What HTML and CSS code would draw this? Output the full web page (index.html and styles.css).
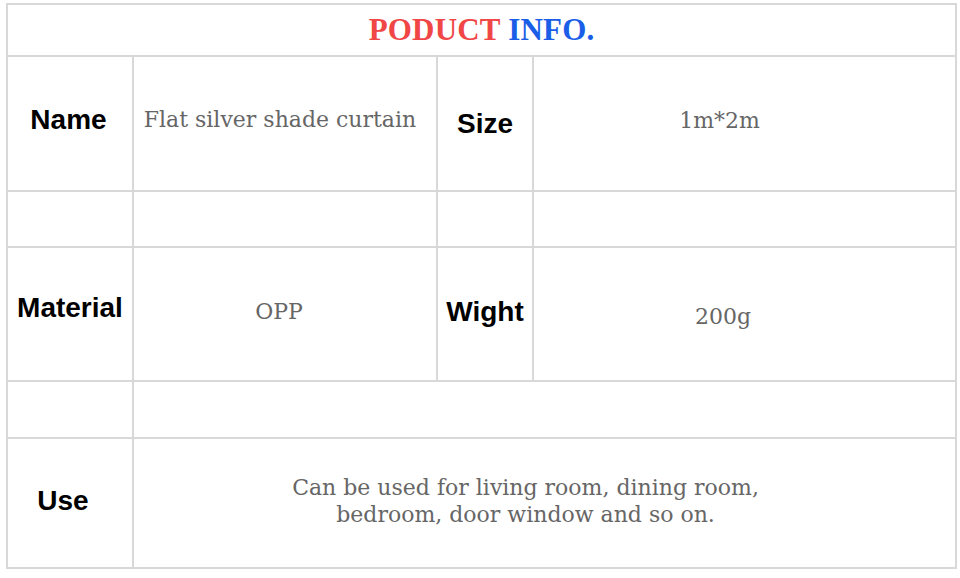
FILE: index.html
```html
<!DOCTYPE html>
<html>
<head>
<meta charset="utf-8">
<link rel="stylesheet" href="styles.css">
</head>
<body>
<table class="info">
  <colgroup>
    <col class="c1"><col class="c2"><col class="c3"><col class="c4">
  </colgroup>
  <tr class="r-head">
    <td colspan="4" class="title"><span class="red">PODUCT</span> <span class="blue">INFO.</span></td>
  </tr>
  <tr class="r-main">
    <td class="label up4 nudge-l">Name</td>
    <td class="value up4 nudge-v">Flat silver shade curtain</td>
    <td class="label">Size</td>
    <td class="value up3 shift-a">1m*2m</td>
  </tr>
  <tr class="r-gap"><td></td><td></td><td></td><td></td></tr>
  <tr class="r-main2">
    <td class="label up6">Material</td>
    <td class="value up3 nudge-o">OPP</td>
    <td class="label up2">Wight</td>
    <td class="value down2 shift-b">200g</td>
  </tr>
  <tr class="r-gap2"><td></td><td colspan="3"></td></tr>
  <tr class="r-use">
    <td class="label up2 use-label">Use</td>
    <td colspan="3" class="value use up2">Can be used for living room, dining room,<br>bedroom, door window and so on.</td>
  </tr>
</table>
</body>
</html>
```

FILE: styles.css
```css
html, body {
  margin: 0;
  padding: 0;
  background: #ffffff;
}

.info {
  margin: 3px 0 0 6px;
  width: 949px;
  border-collapse: collapse;
  table-layout: fixed;
}

.c1 { width: 126px; }
.c2 { width: 304px; }
.c3 { width: 96px; }
.c4 { width: 423px; }

.info td {
  border: 2px solid #d8d8d8;
  padding: 0;
  text-align: center;
  vertical-align: middle;
}

.r-head { height: 52px; }
.r-main { height: 135px; }
.r-gap { height: 56px; }
.r-main2 { height: 134px; }
.r-gap2 { height: 57px; }
.r-use { height: 130px; }

.title {
  font-family: "Liberation Serif", "Times New Roman", serif;
  font-weight: bold;
  font-size: 31px;
  letter-spacing: 0.2px;
}
.red { color: #f04646; }
.blue { color: #1a5ee8; }

.label {
  font-family: "Liberation Sans", Arial, sans-serif;
  font-weight: bold;
  font-size: 28px;
  color: #000000;
}

.value {
  font-family: "DejaVu Serif", "Liberation Serif", serif;
  font-size: 22px;
  color: #666666;
}

.use {
  line-height: 27px;
  padding-right: 38px !important;
}

.nudge-l { padding-right: 3px !important; }
.nudge-v { padding-right: 10px !important; }
.nudge-o { padding-right: 12px !important; }
.use-label { padding-right: 14px !important; }
.shift-a { padding-right: 50px !important; }
.shift-b { padding-right: 43px !important; }

.up2 { padding-bottom: 4px !important; }
.up3 { padding-bottom: 6px !important; }
.up4 { padding-bottom: 8px !important; }
.up6 { padding-bottom: 12px !important; }
.down2 { padding-top: 4px !important; }
```
